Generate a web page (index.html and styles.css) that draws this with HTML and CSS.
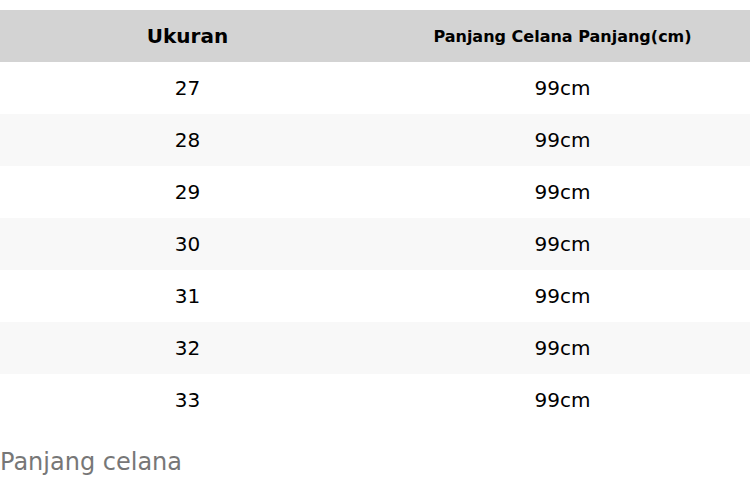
FILE: index.html
```html
<!DOCTYPE html>
<html>
<head>
<meta charset="utf-8">
<link rel="stylesheet" href="styles.css">
</head>
<body>
<table class="size-table">
  <thead>
    <tr><th class="h1">Ukuran</th><th class="h2">Panjang Celana Panjang(cm)</th></tr>
  </thead>
  <tbody>
    <tr><td>27</td><td>99cm</td></tr>
    <tr><td>28</td><td>99cm</td></tr>
    <tr><td>29</td><td>99cm</td></tr>
    <tr><td>30</td><td>99cm</td></tr>
    <tr><td>31</td><td>99cm</td></tr>
    <tr><td>32</td><td>99cm</td></tr>
    <tr><td>33</td><td>99cm</td></tr>
  </tbody>
</table>
<p class="caption">Panjang celana</p>
</body>
</html>
```
FILE: styles.css
```css
html, body {
  margin: 0;
  padding: 0;
  background: #fff;
  font-family: "DejaVu Sans", sans-serif;
}
.size-table {
  margin-top: 10px;
  width: 750px;
  border-collapse: collapse;
  table-layout: fixed;
}
.size-table th, .size-table td {
  width: 50%;
  height: 52px;
  padding: 0;
  text-align: center;
  vertical-align: middle;
  color: #000;
}
.size-table thead tr {
  background: #d3d3d3;
}
.size-table th.h1 {
  font-size: 20px;
  font-weight: bold;
}
.size-table th.h2 {
  font-size: 16px;
  font-weight: bold;
}
.size-table td {
  font-size: 20px;
}
.size-table tbody tr:nth-child(even) {
  background: #f8f8f8;
}
.caption {
  margin: 22px 0 0;
  font-size: 24px;
  color: #777;
}
```
